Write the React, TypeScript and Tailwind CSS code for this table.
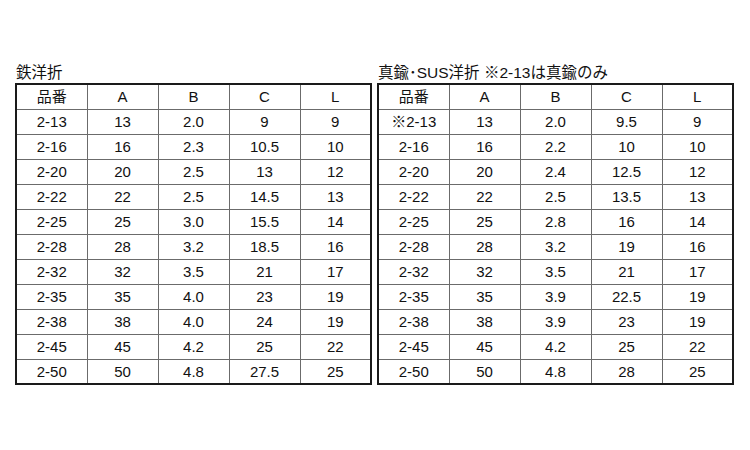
import React from 'react';

type Row = [string, string, string, string, string];

const HEAD: Row = ['品番', 'A', 'B', 'C', 'L'];

const STEEL: Row[] = [
  ['2-13', '13', '2.0', '9', '9'],
  ['2-16', '16', '2.3', '10.5', '10'],
  ['2-20', '20', '2.5', '13', '12'],
  ['2-22', '22', '2.5', '14.5', '13'],
  ['2-25', '25', '3.0', '15.5', '14'],
  ['2-28', '28', '3.2', '18.5', '16'],
  ['2-32', '32', '3.5', '21', '17'],
  ['2-35', '35', '4.0', '23', '19'],
  ['2-38', '38', '4.0', '24', '19'],
  ['2-45', '45', '4.2', '25', '22'],
  ['2-50', '50', '4.8', '27.5', '25'],
];

const BRASS: Row[] = [
  ['※2-13', '13', '2.0', '9.5', '9'],
  ['2-16', '16', '2.2', '10', '10'],
  ['2-20', '20', '2.4', '12.5', '12'],
  ['2-22', '22', '2.5', '13.5', '13'],
  ['2-25', '25', '2.8', '16', '14'],
  ['2-28', '28', '3.2', '19', '16'],
  ['2-32', '32', '3.5', '21', '17'],
  ['2-35', '35', '3.9', '22.5', '19'],
  ['2-38', '38', '3.9', '23', '19'],
  ['2-45', '45', '4.2', '25', '22'],
  ['2-50', '50', '4.8', '28', '25'],
];

function SizeTable({ title, rows }: { title: string; rows: Row[] }) {
  return (
    <div className="flex flex-col">
      <div className="h-[21px] pl-px text-[15.5px] leading-[21px] whitespace-nowrap">{title}</div>
      <table className="w-[357px] table-fixed border-collapse border-2 border-[#1a1a1a]">
        <tbody>
          {[HEAD, ...rows].map((row, i) => (
            <tr key={i} className="h-[25px]">
              {row.map((cell, j) => (
                <td
                  key={j}
                  className="border border-[#6b6b6b] p-0 text-center text-[15px] leading-none"
                >
                  {cell}
                </td>
              ))}
            </tr>
          ))}
        </tbody>
      </table>
    </div>
  );
}

export default function App() {
  return (
    <div
      className="h-[450px] w-[750px] bg-white text-[#111]"
      style={{ fontFamily: '"Liberation Sans", "Noto Sans CJK JP", sans-serif' }}
    >
      <div className="flex gap-[5px] pl-[15px] pt-[62px]">
        <SizeTable title="鉄洋折" rows={STEEL} />
        <SizeTable title="真鍮･SUS洋折 ※2-13は真鍮のみ" rows={BRASS} />
      </div>
    </div>
  );
}
